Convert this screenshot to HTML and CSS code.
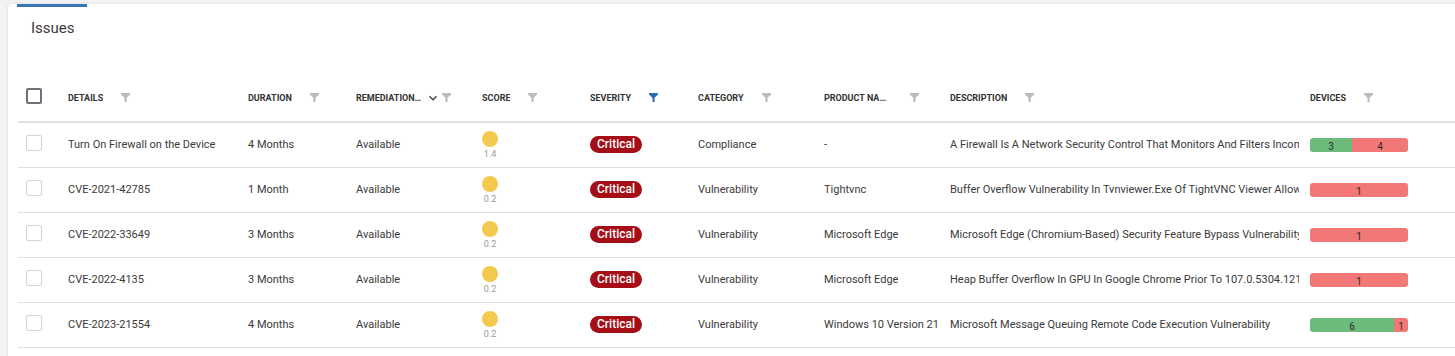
FILE: index.html
```html
<!DOCTYPE html>
<html lang="en">
<head>
    <meta charset="UTF-8">
    <title>Issues</title>
    <link rel="stylesheet" href="styles.css">
</head>
<body>
    <div class="issues-card">
        <div class="tab-bar"></div>
        <h2 class="issues-title">Issues</h2>

        <table class="issues-table">
            <colgroup>
                <col style="width: 42px">
                <col style="width: 180px">
                <col style="width: 108px">
                <col style="width: 126px">
                <col style="width: 108px">
                <col style="width: 108px">
                <col style="width: 126px">
                <col style="width: 126px">
                <col style="width: 360px">
                <col style="width: 160px">
            </colgroup>
            <thead>
                <tr>
                    <th><span class="checkbox head"></span></th>
                    <th><div class="th-inner"><span class="th-label">Details</span><svg class="filter" viewBox="0 0 10 10"><path d="M0 0h10v1.6L6.2 5.4V10H3.8V5.4L0 1.6z"/></svg></div></th>
                    <th><div class="th-inner"><span class="th-label">Duration</span><svg class="filter" viewBox="0 0 10 10"><path d="M0 0h10v1.6L6.2 5.4V10H3.8V5.4L0 1.6z"/></svg></div></th>
                    <th><div class="th-inner"><span class="th-label short">Remediation Status</span><svg class="chevron" viewBox="0 0 10 10"><path d="M1.5 3.2L5 6.7l3.5-3.5"/></svg><svg class="filter tight" viewBox="0 0 10 10"><path d="M0 0h10v1.6L6.2 5.4V10H3.8V5.4L0 1.6z"/></svg></div></th>
                    <th><div class="th-inner"><span class="th-label">Score</span><svg class="filter" viewBox="0 0 10 10"><path d="M0 0h10v1.6L6.2 5.4V10H3.8V5.4L0 1.6z"/></svg></div></th>
                    <th><div class="th-inner"><span class="th-label">Severity</span><svg class="filter active" viewBox="0 0 10 10"><path d="M0 0h10v1.6L6.2 5.4V10H3.8V5.4L0 1.6z"/></svg></div></th>
                    <th><div class="th-inner"><span class="th-label">Category</span><svg class="filter" viewBox="0 0 10 10"><path d="M0 0h10v1.6L6.2 5.4V10H3.8V5.4L0 1.6z"/></svg></div></th>
                    <th><div class="th-inner"><span class="th-label short">Product Name</span><svg class="filter wide" viewBox="0 0 10 10"><path d="M0 0h10v1.6L6.2 5.4V10H3.8V5.4L0 1.6z"/></svg></div></th>
                    <th><div class="th-inner"><span class="th-label">Description</span><svg class="filter" viewBox="0 0 10 10"><path d="M0 0h10v1.6L6.2 5.4V10H3.8V5.4L0 1.6z"/></svg></div></th>
                    <th><div class="th-inner"><span class="th-label">Devices</span><svg class="filter" viewBox="0 0 10 10"><path d="M0 0h10v1.6L6.2 5.4V10H3.8V5.4L0 1.6z"/></svg></div></th>
                </tr>
            </thead>
            <tbody>
                <tr>
                    <td><span class="checkbox"></span></td>
                    <td>Turn On Firewall on the Device</td>
                    <td>4 Months</td>
                    <td>Available</td>
                    <td><div class="score"><span class="score-dot"></span><span class="score-value">1.4</span></div></td>
                    <td><span class="badge critical">Critical</span></td>
                    <td>Compliance</td>
                    <td><div class="clip product">-</div></td>
                    <td><div class="clip desc">A Firewall Is A Network Security Control That Monitors And Filters Incoming And Outgoing Network Traffic</div></td>
                    <td><div class="devices"><span class="seg ok" style="flex: 3">3</span><span class="seg bad" style="flex: 4">4</span></div></td>
                </tr>
                <tr>
                    <td><span class="checkbox"></span></td>
                    <td>CVE-2021-42785</td>
                    <td>1 Month</td>
                    <td>Available</td>
                    <td><div class="score"><span class="score-dot"></span><span class="score-value">0.2</span></div></td>
                    <td><span class="badge critical">Critical</span></td>
                    <td>Vulnerability</td>
                    <td><div class="clip product">Tightvnc</div></td>
                    <td><div class="clip desc">Buffer Overflow Vulnerability In Tvnviewer.Exe Of TightVNC Viewer Allows Remote Attackers</div></td>
                    <td><div class="devices"><span class="seg bad" style="flex: 1">1</span></div></td>
                </tr>
                <tr>
                    <td><span class="checkbox"></span></td>
                    <td>CVE-2022-33649</td>
                    <td>3 Months</td>
                    <td>Available</td>
                    <td><div class="score"><span class="score-dot"></span><span class="score-value">0.2</span></div></td>
                    <td><span class="badge critical">Critical</span></td>
                    <td>Vulnerability</td>
                    <td><div class="clip product">Microsoft Edge</div></td>
                    <td><div class="clip desc">Microsoft Edge (Chromium-Based) Security Feature Bypass Vulnerability</div></td>
                    <td><div class="devices"><span class="seg bad" style="flex: 1">1</span></div></td>
                </tr>
                <tr>
                    <td><span class="checkbox"></span></td>
                    <td>CVE-2022-4135</td>
                    <td>3 Months</td>
                    <td>Available</td>
                    <td><div class="score"><span class="score-dot"></span><span class="score-value">0.2</span></div></td>
                    <td><span class="badge critical">Critical</span></td>
                    <td>Vulnerability</td>
                    <td><div class="clip product">Microsoft Edge</div></td>
                    <td><div class="clip desc">Heap Buffer Overflow In GPU In Google Chrome Prior To 107.0.5304.121 Allowed A Remote Attacker</div></td>
                    <td><div class="devices"><span class="seg bad" style="flex: 1">1</span></div></td>
                </tr>
                <tr>
                    <td><span class="checkbox"></span></td>
                    <td>CVE-2023-21554</td>
                    <td>4 Months</td>
                    <td>Available</td>
                    <td><div class="score"><span class="score-dot"></span><span class="score-value">0.2</span></div></td>
                    <td><span class="badge critical">Critical</span></td>
                    <td>Vulnerability</td>
                    <td><div class="clip product">Windows 10 Version 21H2</div></td>
                    <td><div class="clip desc">Microsoft Message Queuing Remote Code Execution Vulnerability</div></td>
                    <td><div class="devices"><span class="seg ok" style="flex: 6">6</span><span class="seg bad" style="flex: 1">1</span></div></td>
                </tr>
                <tr>
                    <td><span class="checkbox"></span></td>
                    <td>CVE-2023-21768</td>
                    <td>4 Months</td>
                    <td>Available</td>
                    <td><div class="score"><span class="score-dot"></span><span class="score-value">0.2</span></div></td>
                    <td><span class="badge critical">Critical</span></td>
                    <td>Vulnerability</td>
                    <td><div class="clip product">Windows 11</div></td>
                    <td><div class="clip desc">Windows Ancillary Function Driver For WinSock Elevation Of Privilege Vulnerability</div></td>
                    <td><div class="devices"><span class="seg bad" style="flex: 1">1</span></div></td>
                </tr>
            </tbody>
        </table>
    </div>
</body>
</html>
```

FILE: styles.css
```css
* {
    margin: 0;
    padding: 0;
    box-sizing: border-box;
}

html, body {
    height: 356px;
    overflow: hidden;
}

body {
    font-family: Roboto, "Liberation Sans", Arial, sans-serif;
    background: #f3f3f3;
    color: #333;
    padding: 4px 0 0 8px;
}

.issues-card {
    background: #fff;
    border-radius: 4px 0 0 0;
    box-shadow: 0 0 3px rgba(0, 0, 0, 0.12);
    width: 1460px;
    min-height: 400px;
    padding: 0 0 0 10px;
}

.tab-bar {
    width: 70px;
    height: 3px;
    margin-left: -1px;
    background: #3a77b9;
}

.issues-title {
    font-size: 15px;
    font-weight: 400;
    line-height: 20px;
    color: #3a3a3a;
    margin: 11px 0 0 13px;
}

.issues-table {
    margin-top: 36px;
    border-collapse: collapse;
    table-layout: fixed;
    width: 1344px;
}

.issues-table th {
    height: 48px;
    padding: 0 0 0 8px;
    text-align: left;
    vertical-align: middle;
    border-bottom: 2px solid #e0e0e0;
}

.issues-table td {
    height: 45px;
    padding: 0 2px 0 8px;
    font-size: 11px;
    color: #3a3a3a;
    white-space: nowrap;
    vertical-align: middle;
    border-bottom: 1px solid #e0e0e0;
}

.clip {
    overflow: hidden;
}

.clip.product {
    width: 115px;
}

.clip.desc {
    width: 349px;
}

.th-inner {
    display: flex;
    align-items: center;
}

.th-label {
    font-size: 9px;
    font-weight: 700;
    text-transform: uppercase;
    color: #333;
    white-space: nowrap;
    overflow: hidden;
    text-overflow: ellipsis;
}

.th-label.short {
    max-width: 66px;
}

.filter {
    width: 9px;
    height: 9px;
    margin-left: 18px;
    flex-shrink: 0;
    fill: #bcbcbc;
}

.filter.tight {
    margin-left: 4px;
}

.filter.wide {
    margin-left: 20px;
}

.filter.active {
    fill: #2f6cb3;
}

.chevron {
    width: 10px;
    height: 10px;
    margin-left: 6px;
    flex-shrink: 0;
    fill: none;
    stroke: #444;
    stroke-width: 1.4;
}

.checkbox {
    display: block;
    width: 16px;
    height: 16px;
    border: 1.5px solid #d4d4d4;
    border-radius: 2px;
    margin-top: -4px;
}

.checkbox.head {
    border: 2px solid #6f6f7a;
    margin-top: -4px;
}

.score {
    display: inline-flex;
    flex-direction: column;
    align-items: center;
    margin-top: 1px;
}

.score-dot {
    width: 16px;
    height: 16px;
    border-radius: 50%;
    background: #f3c94e;
}

.score-value {
    font-size: 9px;
    line-height: 12px;
    color: #9a9a9a;
    margin-top: 1px;
}

.badge {
    display: inline-block;
    font-size: 12px;
    font-weight: 500;
    line-height: 17px;
    padding: 0 7px;
    border-radius: 9px;
}

.badge.critical {
    background: #a50e16;
    color: #fff;
}

.devices {
    display: flex;
    width: 98px;
    height: 14px;
    border-radius: 3px;
    overflow: hidden;
    margin-top: 1px;
}

.seg {
    display: flex;
    align-items: center;
    justify-content: center;
    font-size: 10px;
    color: #2a2a2a;
    padding-top: 2px;
}

.seg.ok {
    background: #6dbb7b;
}

.seg.bad {
    background: #f27878;
}
```
